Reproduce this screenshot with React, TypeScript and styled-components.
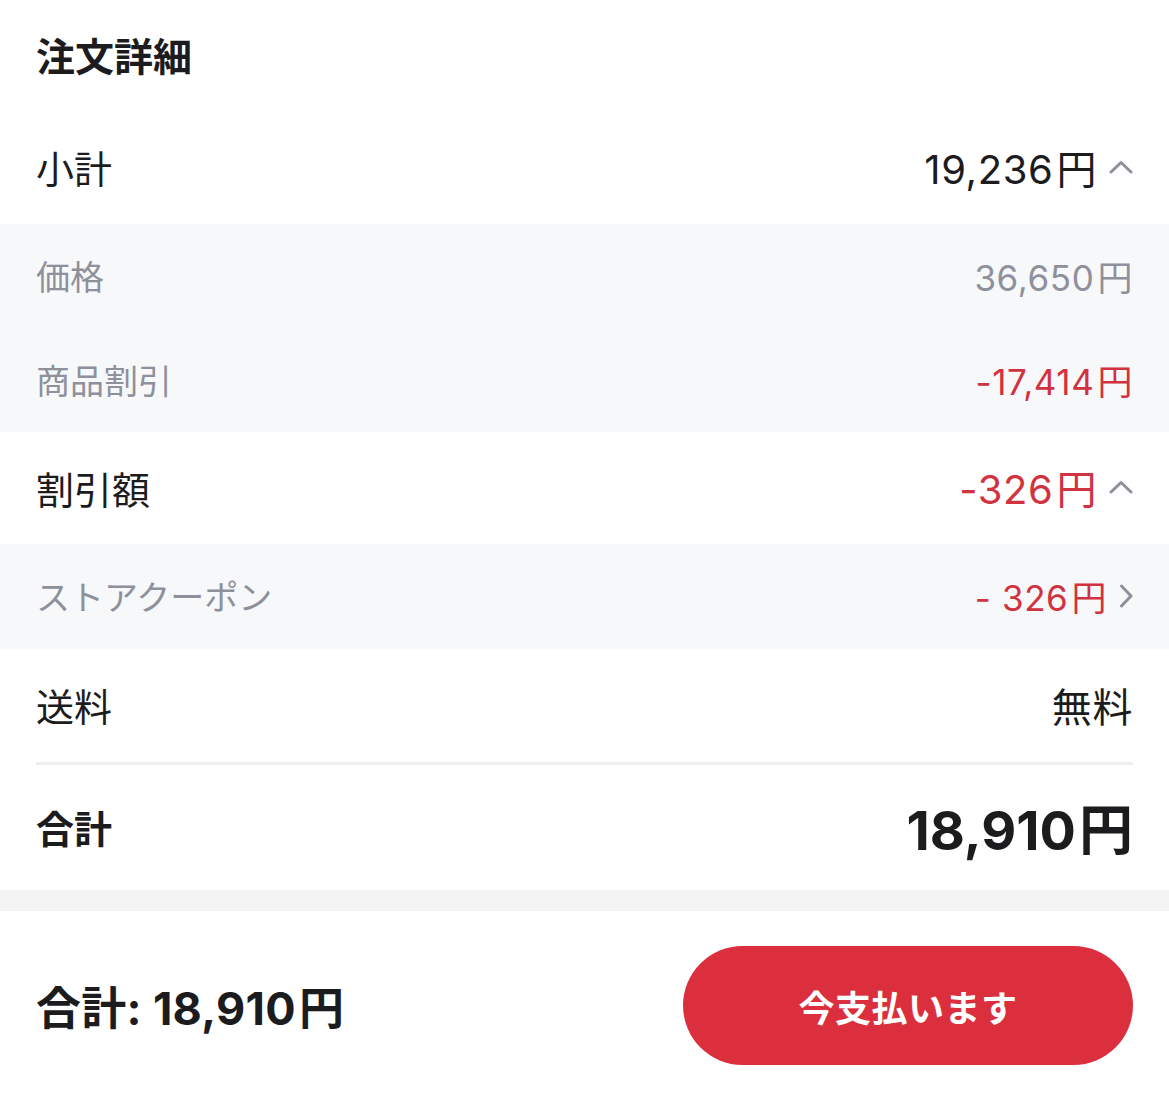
import React from "react";
import styled, { createGlobalStyle } from "styled-components";

const GlobalStyle = createGlobalStyle`
  html, body {
    margin: 0;
    padding: 0;
    background: #ffffff;
  }
  body {
    font-family: "Inter", "Noto Sans CJK JP", sans-serif;
    color: #1c1c1e;
  }
`;

const RED = "#d1323f";
const GREY_TEXT = "#8e909b";

const Page = styled.div`
  width: 1169px;
  min-height: 1102px;
  display: flex;
  flex-direction: column;
  background: #ffffff;
`;

const Details = styled.section`
  display: flex;
  flex-direction: column;
`;

const Title = styled.h2`
  margin: 0;
  padding: 30px 36px 0;
  height: 111px;
  box-sizing: border-box;
  font-size: 39px;
  font-weight: 700;
  line-height: 54px;
`;

const Row = styled.div<{ $sub?: boolean; $h: number }>`
  display: flex;
  align-items: center;
  justify-content: space-between;
  height: ${(p) => p.$h}px;
  padding: 0 36px 2px;
  box-sizing: border-box;
  background: ${(p) => (p.$sub ? "#f7f8fa" : "#ffffff")};
`;

const Label = styled.span<{ $sub?: boolean; $bold?: boolean }>`
  font-size: ${(p) => (p.$sub ? 34 : 38)}px;
  font-weight: ${(p) => (p.$bold ? 700 : 400)};
  color: ${(p) => (p.$sub ? GREY_TEXT : "#1c1c1e")};
`;

const Value = styled.span<{ $sub?: boolean; $red?: boolean }>`
  display: flex;
  align-items: center;
  gap: 12px;
  font-size: ${(p) => (p.$sub ? 35 : 40)}px;
  letter-spacing: 0.6px;
  color: ${(p) => (p.$red ? RED : p.$sub ? GREY_TEXT : "#1c1c1e")};
`;

const Yen = styled.span`
  margin-left: 3px;
`;

const Big = styled.span`
  font-size: 54px;
  font-weight: 700;
  letter-spacing: 0;
`;

const Divider = styled.div`
  height: 3px;
  margin: 0 36px;
  background: #eeeeef;
`;

const Band = styled.div`
  height: 21px;
  background: #f4f4f5;
`;

const Footer = styled.footer`
  display: flex;
  align-items: center;
  justify-content: space-between;
  padding: 35px 36px 37px;
`;

const FooterTotal = styled.span`
  font-size: 45px;
  font-weight: 700;
  letter-spacing: 0.3px;
`;

const PayButton = styled.button`
  width: 450px;
  height: 119px;
  border: none;
  border-radius: 60px;
  background: #dc2f3e;
  color: #ffffff;
  font-family: inherit;
  font-size: 36px;
  font-weight: 700;
  letter-spacing: 0.5px;
`;

const ChevronUp = () => (
  <svg width="24" height="14" viewBox="0 0 24 14" fill="none">
    <path d="M2 12L12 2.5L22 12" stroke="#8e909b" strokeWidth="3" strokeLinecap="round" strokeLinejoin="round" />
  </svg>
);

const ChevronRight = () => (
  <svg width="14" height="24" viewBox="0 0 14 24" fill="none">
    <path d="M2.5 2L12 12L2.5 22" stroke="#8e909b" strokeWidth="3" strokeLinecap="round" strokeLinejoin="round" />
  </svg>
);

const Price = ({ amount }: { amount: string }) => (
  <>
    {amount}
    <Yen>円</Yen>
  </>
);

export default function App() {
  return (
    <Page>
      <GlobalStyle />
      <Details>
        <Title>注文詳細</Title>
        <Row $h={113}>
          <Label>小計</Label>
          <Value>
            <span><Price amount="19,236" /></span>
            <ChevronUp />
          </Value>
        </Row>
        <Row $sub $h={104}>
          <Label $sub>価格</Label>
          <Value $sub><span><Price amount="36,650" /></span></Value>
        </Row>
        <Row $sub $h={104}>
          <Label $sub>商品割引</Label>
          <Value $sub $red><span><Price amount="-17,414" /></span></Value>
        </Row>
        <Row $h={112}>
          <Label>割引額</Label>
          <Value $red>
            <span><Price amount="-326" /></span>
            <ChevronUp />
          </Value>
        </Row>
        <Row $sub $h={105}>
          <Label $sub>ストアクーポン</Label>
          <Value $sub $red>
            <span><Price amount="- 326" /></span>
            <ChevronRight />
          </Value>
        </Row>
        <Row $h={113}>
          <Label>送料</Label>
          <Value>無料</Value>
        </Row>
        <Divider />
        <Row $h={125}>
          <Label $bold>合計</Label>
          <Big><Price amount="18,910" /></Big>
        </Row>
      </Details>
      <Band />
      <Footer>
        <FooterTotal>合計: 18,910<Yen>円</Yen></FooterTotal>
        <PayButton>今支払います</PayButton>
      </Footer>
    </Page>
  );
}
